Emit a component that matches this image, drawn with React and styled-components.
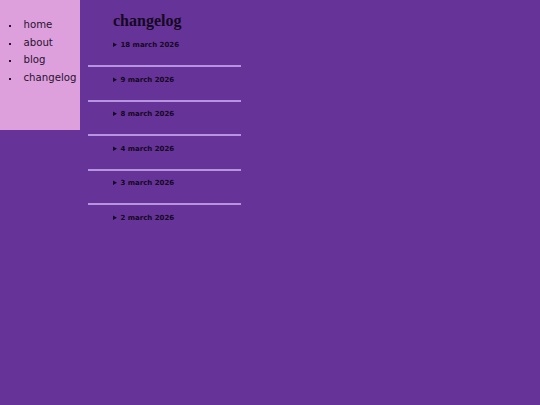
import React from "react";
import styled, { createGlobalStyle } from "styled-components";

const Global = createGlobalStyle`
  html, body { margin: 0; padding: 0; background: #663399; }
  body { font-family: "DejaVu Sans", Verdana, sans-serif; color: #140822; }
`;

const Page = styled.div`
  display: flex;
  align-items: flex-start;
`;

const Sidebar = styled.nav`
  width: 80px;
  height: 130px;
  background: #dda0dd;
  flex-shrink: 0;
  box-sizing: border-box;
  padding: 16px 0 0 9px;
`;

const NavList = styled.ul`
  margin: 0;
  padding: 0;
  list-style: none;
  font-family: "DejaVu Sans Condensed", "DejaVu Sans", sans-serif;
  font-size: 11.3px;
  line-height: 17.7px;
  color: #2a1230;
`;

const NavItem = styled.li`
  display: flex;
  align-items: center;
`;

const Bullet = styled.span`
  width: 2px;
  height: 2px;
  background: #2a1230;
  margin-right: 12.5px;
  flex-shrink: 0;
  transform: translateY(1px);
`;

const Main = styled.main`
  margin-left: 8px;
  width: 153px;
`;

const Title = styled.h1`
  font-family: "Liberation Serif", "Times New Roman", serif;
  font-size: 16px;
  font-weight: bold;
  margin: 12px 0 0 25px;
  line-height: 18px;
`;

const Entry = styled.details`
  padding-left: 25px;
  margin-top: ${(p) => (p.$first ? "10px" : "7.5px")};
`;

const Summary = styled.summary`
  font-size: 7px;
  font-weight: bold;
  line-height: 10px;
  cursor: pointer;
  &::marker { font-size: 7px; }
`;

const Rule = styled.hr`
  border: none;
  height: 2px;
  background: #b894e0;
  margin: 15px 0 0 0;
`;

const dates = [
  "18 march 2026",
  "9 march 2026",
  "8 march 2026",
  "4 march 2026",
  "3 march 2026",
  "2 march 2026",
];

const links = ["home", "about", "blog", "changelog"];

export default function App() {
  return (
    <>
      <Global />
      <Page>
        <Sidebar>
          <NavList>
            {links.map((l) => (
              <NavItem key={l}>
                <Bullet />
                {l}
              </NavItem>
            ))}
          </NavList>
        </Sidebar>
        <Main>
          <Title>changelog</Title>
          {dates.map((d, i) => (
            <React.Fragment key={d}>
              <Entry $first={i === 0}>
                <Summary>{d}</Summary>
              </Entry>
              {i < dates.length - 1 && <Rule />}
            </React.Fragment>
          ))}
        </Main>
      </Page>
    </>
  );
}
